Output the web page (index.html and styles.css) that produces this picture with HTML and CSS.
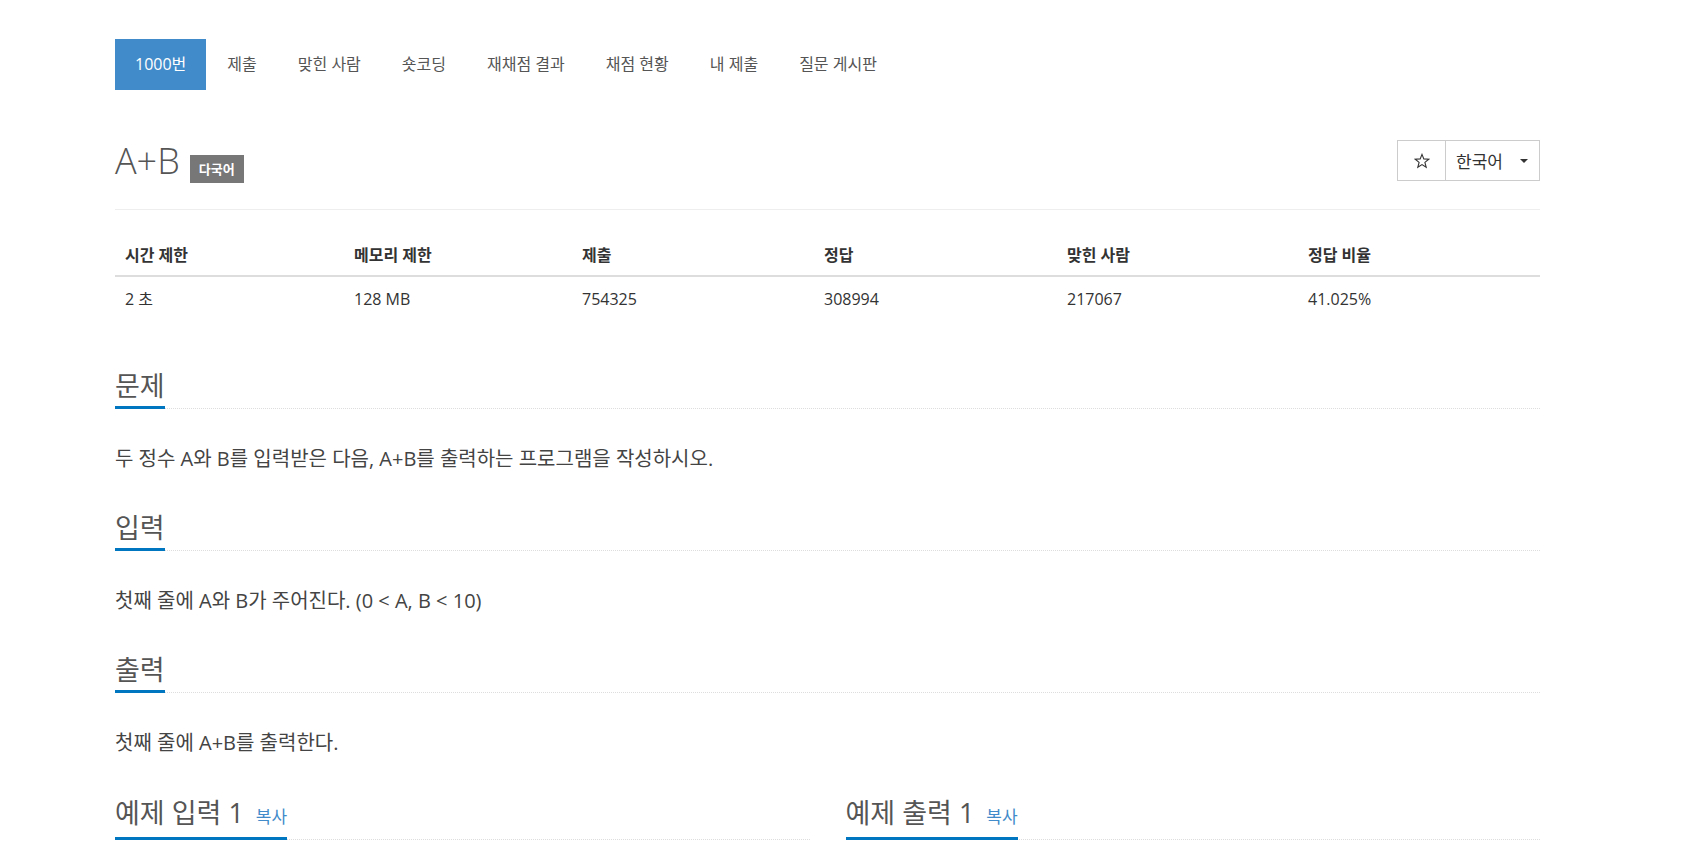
FILE: index.html
```html
<!DOCTYPE html>
<html lang="ko">
<head>
<meta charset="utf-8">
<title>1000번: A+B</title>
<link rel="stylesheet" href="styles.css">
</head>
<body>
<div class="container">
  <ul class="tabs">
    <li class="active"><a href="#">1000번</a></li>
    <li><a href="#">제출</a></li>
    <li><a href="#">맞힌 사람</a></li>
    <li><a href="#">숏코딩</a></li>
    <li><a href="#">재채점 결과</a></li>
    <li><a href="#">채점 현황</a></li>
    <li><a href="#">내 제출</a></li>
    <li><a href="#">질문 게시판</a></li>
  </ul>

  <div class="page-header">
    <div class="title">
      <h1>A+B</h1>
      <span class="label">다국어</span>
    </div>
    <div class="btn-group">
      <button class="btn btn-star" type="button" aria-label="즐겨찾기">
        <svg width="16" height="16" viewBox="0 0 16 16"><path d="M8 1.4 L9.8 5.9 L14.8 6.2 L10.9 9.4 L12.2 14.3 L8 11.6 L3.8 14.3 L5.1 9.4 L1.2 6.2 L6.2 5.9 Z" fill="none" stroke="#333" stroke-width="1.1" stroke-linejoin="miter"/></svg>
      </button>
      <button class="btn btn-lang" type="button">한국어<span class="caret"></span></button>
    </div>
  </div>

  <table class="info">
    <colgroup>
      <col class="c1"><col class="c2"><col class="c3"><col class="c4"><col class="c5"><col class="c6">
    </colgroup>
    <thead>
      <tr><th>시간 제한</th><th>메모리 제한</th><th>제출</th><th>정답</th><th>맞힌 사람</th><th>정답 비율</th></tr>
    </thead>
    <tbody>
      <tr><td>2 초</td><td>128 MB</td><td>754325</td><td>308994</td><td>217067</td><td>41.025%</td></tr>
    </tbody>
  </table>

  <section class="section first">
    <div class="headline"><h2>문제</h2></div>
    <p>두 정수 A와 B를 입력받은 다음, A+B를 출력하는 프로그램을 작성하시오.</p>
  </section>

  <section class="section">
    <div class="headline"><h2>입력</h2></div>
    <p>첫째 줄에 A와 B가 주어진다. (0 &lt; A, B &lt; 10)</p>
  </section>

  <section class="section">
    <div class="headline"><h2>출력</h2></div>
    <p>첫째 줄에 A+B를 출력한다.</p>
  </section>

  <div class="samples">
    <div class="sample">
      <div class="headline"><h2>예제 입력 1<a class="copy" href="#">복사</a></h2></div>
    </div>
    <div class="sample">
      <div class="headline"><h2>예제 출력 1<a class="copy" href="#">복사</a></h2></div>
    </div>
  </div>
</div>
</body>
</html>
```

FILE: styles.css
```css
html, body {
  margin: 0;
  padding: 0;
  background: #fff;
}

body {
  font-family: "Open Sans", "Noto Sans CJK KR", sans-serif;
  color: #333;
  font-size: 16px;
}

.container {
  width: 1425px;
  margin-left: 115px;
  padding-top: 39px;
}

/* tabs */
.tabs {
  display: flex;
  list-style: none;
  margin: 0;
  padding: 0;
}

.tabs li + li {
  margin-left: 1px;
}

.tabs a {
  display: block;
  padding: 15px 20px;
  line-height: 21px;
  font-size: 16px;
  color: #555;
  text-decoration: none;
}

.tabs .active a {
  background: #428bca;
  color: #fff;
}

/* header */
.page-header {
  display: flex;
  justify-content: space-between;
  align-items: flex-start;
  margin-top: 50px;
  padding-bottom: 26px;
  border-bottom: 1px solid #eee;
}

.title {
  display: flex;
  align-items: flex-start;
}

.title h1 {
  margin: 0;
  font-size: 36px;
  line-height: 41px;
  font-weight: 300;
  color: #555;
}

.label {
  margin-left: 10px;
  margin-top: 15px;
  background: #777;
  color: #fff;
  font-size: 13px;
  font-weight: 700;
  line-height: 14px;
  padding: 7px 9px;
}

.btn-group {
  display: flex;
}

.btn {
  height: 41px;
  background: #fff;
  border: 1px solid #ccc;
  font-family: inherit;
  color: #333;
  display: flex;
  align-items: center;
  margin: 0;
  cursor: pointer;
}

.btn-star {
  width: 49px;
  justify-content: center;
  padding: 0;
}

.btn-lang {
  width: 95px;
  margin-left: -1px;
  padding: 0 0 0 10px;
  font-size: 17px;
}

.caret {
  display: inline-block;
  width: 0;
  height: 0;
  margin-left: 17px;
  border-top: 4px solid #333;
  border-left: 4px solid transparent;
  border-right: 4px solid transparent;
}

/* info table */
.info {
  width: 100%;
  margin-top: 27px;
  border-collapse: collapse;
  table-layout: fixed;
}

.c1 { width: 229px; }
.c2 { width: 228px; }
.c3 { width: 242px; }
.c4 { width: 243px; }
.c5 { width: 241px; }
.c6 { width: 242px; }

.info th,
.info td {
  text-align: left;
  line-height: 24px;
  font-size: 16px;
  color: #333;
}

.info th {
  padding: 6px 10px 8px;
  font-weight: 700;
  border-bottom: 2px solid #ddd;
}

.info td {
  padding: 10px 10px 8px;
}

/* sections */
.section {
  margin-top: 38px;
}

.section.first {
  margin-top: 52px;
}

.headline {
  display: flex;
  border-bottom: 1px dotted #ddd;
}

.headline h2 {
  margin: 0 0 -1px 0;
  font-size: 27px;
  line-height: 30px;
  font-weight: 400;
  color: #555;
  padding-bottom: 5px;
  border-bottom: 3px solid #0076c0;
}

.section p {
  margin: 34px 0 0 0;
  font-size: 20px;
  line-height: 32px;
  color: #444;
}

.samples {
  display: grid;
  grid-template-columns: 1fr 1fr;
  column-gap: 36px;
  margin-top: 39px;
}

.copy {
  font-size: 17px;
  color: #428bca;
  text-decoration: none;
  margin-left: 12px;
}
```
